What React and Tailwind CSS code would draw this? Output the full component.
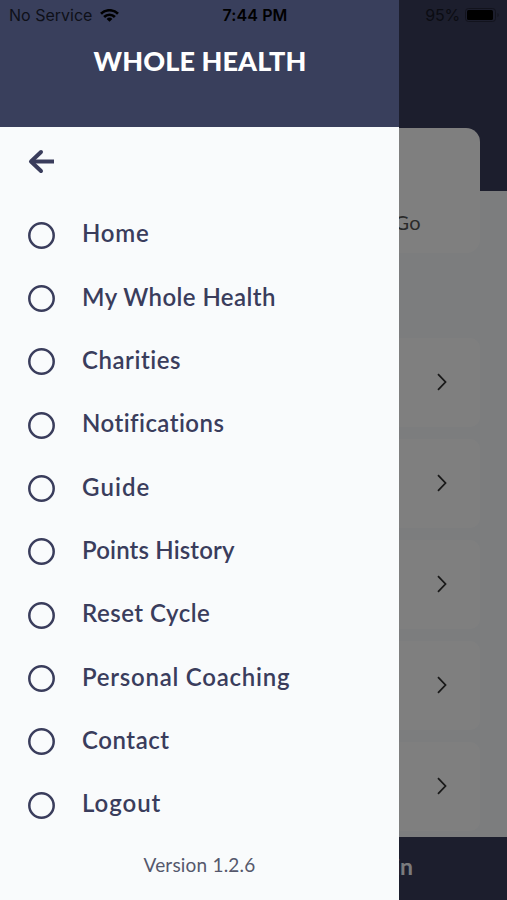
import React from 'react';

const menuItems = [
  { label: 'Home', tracking: 'tracking-[0.8px]' },
  { label: 'My Whole Health', tracking: 'tracking-[0.43px]' },
  { label: 'Charities', tracking: 'tracking-[0.53px]' },
  { label: 'Notifications', tracking: 'tracking-[0.45px]' },
  { label: 'Guide', tracking: 'tracking-[1.1px]' },
  { label: 'Points History', tracking: 'tracking-[0.15px]' },
  { label: 'Reset Cycle', tracking: 'tracking-[0.5px]' },
  { label: 'Personal Coaching', tracking: 'tracking-[0.75px]' },
  { label: 'Contact', tracking: 'tracking-[0.55px]' },
  { label: 'Logout', tracking: 'tracking-[0.95px]' },
];

const WifiIcon = () => (
  <svg className="ml-[8px] h-[13px] w-[19px]" viewBox="0 0 19 13" fill="none" stroke="#000" strokeWidth="2.7">
    <path d="M1 4.8a12 12 0 0 1 17 0" />
    <path d="M4.1 8a7.6 7.6 0 0 1 10.8 0" />
    <path d="M9.5 12.8 6.6 9.9a4.1 4.1 0 0 1 5.8 0z" fill="#000" stroke="none" />
  </svg>
);

const StatusBar = () => (
  <div className="absolute inset-x-0 top-0 grid h-[30px] grid-cols-3 items-center font-['Inter'] text-[16px] text-black">
    <div className="flex items-center pl-[9px] text-[#0e1018]">
      <span className="whitespace-nowrap">No Service</span>
      <WifiIcon />
    </div>
    <div className="pl-[3px] text-center font-semibold tracking-[0.1px] whitespace-nowrap">7:44 PM</div>
    <div className="flex items-center justify-end pr-[7px] text-[#0b0c12]">
      <span className="tracking-[-0.2px]">95%</span>
      <svg className="ml-[5px] h-[14px] w-[35px]" viewBox="0 0 35 14">
        <rect x="0.5" y="0.5" width="30" height="13" rx="3" fill="none" stroke="#12131d" />
        <rect x="2" y="2" width="26" height="10" rx="1.5" fill="#000" />
        <path d="M32.5 5v4c1.6-.6 1.6-3.4 0-4z" fill="#12131d" />
      </svg>
    </div>
  </div>
);

const HomeScreen = () => (
  <div className="flex h-full flex-col bg-[#f9fbfd]">
    <div className="h-[191px] shrink-0 bg-[#383c5a] pt-[128px]">
      <div className="mr-[27px] ml-[27px] flex h-[125px] justify-end rounded-[14px] bg-white pt-[80px] pr-[59px]">
        <span className="font-['Lato'] text-[20px] leading-7 tracking-[0.3px] text-[#555]">To Go</span>
      </div>
    </div>
    <div className="mx-[27px] mt-[147px] flex flex-1 flex-col gap-3">
      {[0, 1, 2, 3, 4].map((card) => (
        <div key={card} className="flex h-[89px] shrink-0 items-center justify-end rounded-[10px] bg-white pr-[33px]">
          <svg className="mt-[-2px] h-[18px] w-[10px]" viewBox="0 0 10 18" fill="none" stroke="#333" strokeWidth="1.8">
            <path d="M1 1.2l7.5 7.8L1 16.8" />
          </svg>
        </div>
      ))}
    </div>
    <div className="flex h-[63px] shrink-0 justify-end bg-[#383c5a] pt-[13px] pr-[94px] font-['Lato'] text-[23px] leading-8 font-bold text-[#f5f6fa]">
      Join
    </div>
  </div>
);

const Drawer = () => (
  <div className="absolute inset-y-0 left-0 flex w-[399px] flex-col bg-[#f9fbfc] text-[#3a3d5c]">
    <div className="flex h-[127px] shrink-0 justify-center bg-[#393f5c] pt-[43px]">
      <h1 className="pl-px font-['Lato'] text-[27px] leading-9 font-black tracking-[0.1px] whitespace-nowrap text-white">WHOLE HEALTH</h1>
    </div>
    <button className="mt-[22px] ml-[28px] h-[25px] w-[27px] shrink-0" aria-label="Back">
      <svg className="h-[25px] w-[27px]" viewBox="0 0 27 25" fill="none" stroke="currentColor" strokeWidth="4">
        <path d="M13 3 3 12.5 13 22" strokeLinecap="round" strokeLinejoin="round" />
        <path d="M3 12.5h23" />
      </svg>
    </button>
    <ul className="mt-[29.5px]">
      {menuItems.map((item) => (
        <li key={item.label} className="flex h-[63.33px] items-center pl-[28px]">
          <svg className="h-[27px] w-[27px]" viewBox="0 0 27 27" fill="none" stroke="currentColor" strokeWidth="2.5">
            <circle cx="13.5" cy="13.5" r="12.2" />
          </svg>
          <span className={`mt-[-3.5px] ml-[27px] font-['Lato'] text-[24px] leading-8 font-semibold whitespace-nowrap ${item.tracking}`}>
            {item.label}
          </span>
        </li>
      ))}
    </ul>
    <p className="mt-[14px] text-center font-['Lato'] text-[19px] leading-7 tracking-[0.2px] text-[#55586c]">Version 1.2.6</p>
  </div>
);

export default function App() {
  return (
    <div className="relative h-[900px] w-[507px] overflow-hidden">
      <HomeScreen />
      <div className="absolute inset-0 bg-black/50" />
      <Drawer />
      <StatusBar />
    </div>
  );
}
